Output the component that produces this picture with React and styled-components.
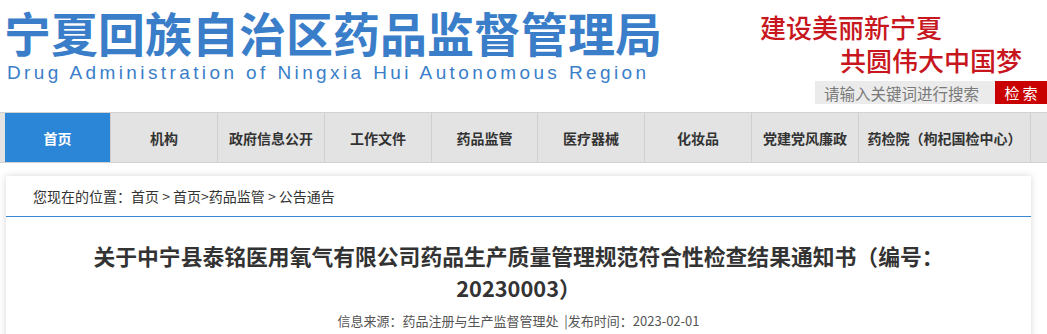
import React from 'react'
import styled, { createGlobalStyle } from 'styled-components'

const GlobalStyle = createGlobalStyle`
  html, body {
    margin: 0;
    padding: 0;
    background: #fff;
    font-family: "Noto Sans CJK SC", "Noto Sans", sans-serif;
    color: #333;
  }
`

const navItems = [
  { label: '首页', width: 106, active: true },
  { label: '机构', width: 107 },
  { label: '政府信息公开', width: 107 },
  { label: '工作文件', width: 107 },
  { label: '药品监管', width: 106 },
  { label: '医疗器械', width: 107 },
  { label: '化妆品', width: 107 },
  { label: '党建党风廉政', width: 107 },
  { label: '药检院（枸杞国检中心）', width: 172 },
]

export default function App() {
  return (
    <Page>
      <GlobalStyle />
      <Header>
        <Logo>
          <h1>宁夏回族自治区药品监督管理局</h1>
          <p>Drug Administration of Ningxia Hui Autonomous Region</p>
        </Logo>
        <Aside>
          <Slogan>
            <span className="first">建设美丽新宁夏</span>
            <span>共圆伟大中国梦</span>
          </Slogan>
          <Search>
            <input placeholder="请输入关键词进行搜索" />
            <button>检索</button>
          </Search>
        </Aside>
      </Header>
      <Nav>
        {navItems.map((item) => (
          <NavItem key={item.label} $width={item.width} $active={item.active}>
            {item.label}
          </NavItem>
        ))}
      </Nav>
      <Main>
        <Card>
          <Crumbs>您现在的位置：首页 &gt; 首页&gt;药品监管 &gt; 公告通告</Crumbs>
          <Article>
            <h2>关于中宁县泰铭医用氧气有限公司药品生产质量管理规范符合性检查结果通知书（编号：20230003）</h2>
            <Meta>信息来源：药品注册与生产监督管理处 &nbsp;|发布时间：2023-02-01</Meta>
          </Article>
        </Card>
      </Main>
    </Page>
  )
}

const Page = styled.div`
  width: 1047px;
  height: 334px;
  overflow: hidden;
`

const Header = styled.header`
  height: 112px;
  display: flex;
  justify-content: space-between;
`

const Logo = styled.div`
  padding: 3px 0 0 4px;
  h1 {
    margin: 0;
    font-size: 47px;
    line-height: 58px;
    font-weight: 700;
    color: #3a7ec9;
    white-space: nowrap;
  }
  p {
    margin: 0 0 0 3px;
    font-family: "Liberation Sans", Arial, sans-serif;
    font-size: 19px;
    line-height: 24px;
    letter-spacing: 3.4px;
    color: #3a7ec9;
    white-space: nowrap;
  }
`

const Aside = styled.div`
  display: flex;
  flex-direction: column;
  align-items: flex-end;
`

const Slogan = styled.div`
  display: flex;
  flex-direction: column;
  align-items: flex-end;
  padding: 10px 25px 0 0;
  span {
    font-size: 26px;
    line-height: 33px;
    color: #c8161e;
    font-weight: 500;
    white-space: nowrap;
  }
  .first {
    margin-right: 80px;
  }
`

const Search = styled.div`
  display: flex;
  margin-top: 5px;
  height: 23px;
  input {
    width: 180px;
    box-sizing: border-box;
    border: none;
    outline: none;
    background: #ebebeb;
    padding: 0 0 0 9px;
    font-family: inherit;
    font-size: 15.5px;
    color: #777;
  }
  input::placeholder {
    color: #7a7a7a;
  }
  button {
    width: 52px;
    border: none;
    background: #c80000;
    color: #fff;
    font-family: inherit;
    font-size: 15px;
    letter-spacing: 3px;
    padding: 0 0 0 3px;
    cursor: pointer;
  }
`

const Nav = styled.nav`
  display: flex;
  height: 49px;
  padding-left: 5px;
  background: #e3e3e3;
  border-top: 1px solid #d2d2d2;
  border-bottom: 1px solid #d2d2d2;
`

const NavItem = styled.a`
  box-sizing: border-box;
  width: ${(p) => p.$width}px;
  display: flex;
  align-items: center;
  justify-content: center;
  font-size: 14px;
  font-weight: 700;
  white-space: nowrap;
  color: ${(p) => (p.$active ? '#fff' : '#333')};
  background: ${(p) => (p.$active ? '#2b86d8' : 'transparent')};
  border-right: 1px solid #d0d0d0;
`

const Main = styled.main`
  padding: 13px 16px 0 6px;
`

const Card = styled.section`
  background: #fff;
  box-shadow: 0 0 7px rgba(0, 0, 0, 0.16);
  height: 200px;
`

const Crumbs = styled.div`
  height: 40px;
  line-height: 40px;
  padding-left: 27px;
  font-size: 14px;
  color: #333;
  border-bottom: 1px solid #3a88d2;
`

const Article = styled.article`
  padding: 23px 0 0;
  text-align: center;
  h2 {
    margin: 0 auto;
    width: 866px;
    font-size: 21.8px;
    line-height: 32px;
    font-weight: 700;
    color: #333;
  }
`

const Meta = styled.div`
  margin-top: 7px;
  font-size: 13px;
  line-height: 20px;
  color: #555;
`
